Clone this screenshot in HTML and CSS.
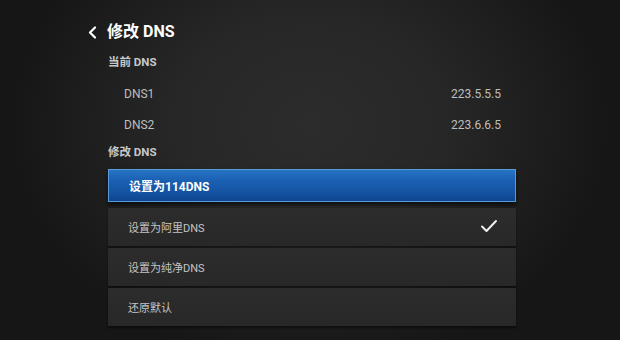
FILE: index.html
```html
<!DOCTYPE html>
<html lang="zh-CN">
<head>
<meta charset="utf-8">
<title>修改 DNS</title>
<link rel="stylesheet" href="styles.css">
</head>
<body>
<div class="screen">
  <div class="panel">
    <header class="header">
      <svg class="back" width="9" height="13" viewBox="0 0 9 13"><polyline points="7,1.5 2,6.5 7,11.5" fill="none" stroke="#fff" stroke-width="2.2" stroke-linecap="round" stroke-linejoin="round"/></svg>
      <h1 class="title">修改 DNS</h1>
    </header>
    <div class="content">
      <div class="label label-first">当前 DNS</div>
      <div class="dns-list">
        <div class="dns-row"><span>DNS1</span><span>223.5.5.5</span></div>
        <div class="dns-row"><span>DNS2</span><span>223.6.6.5</span></div>
      </div>
      <div class="label label-second">修改 DNS</div>
      <div class="item item-selected">设置为114DNS</div>
      <div class="list">
        <div class="item">设置为阿里DNS
          <svg class="check" width="18" height="14" viewBox="0 0 18 14"><polyline points="2,7.5 6.5,12 16,2" fill="none" stroke="#eee" stroke-width="2" stroke-linecap="round" stroke-linejoin="round"/></svg>
        </div>
        <div class="item">设置为纯净DNS</div>
        <div class="item">还原默认</div>
      </div>
    </div>
  </div>
</div>
</body>
</html>
```
FILE: styles.css
```css
html, body {
  margin: 0;
  padding: 0;
}
body {
  width: 620px;
  height: 340px;
  overflow: hidden;
  background: #151515;
  font-family: Roboto, "Noto Sans CJK SC", sans-serif;
}
.screen {
  width: 620px;
  height: 340px;
  background: radial-gradient(ellipse 300px 240px at 310px 125px, #2c2c2c 0%, #272727 45%, #1d1d1d 78%, #161616 100%);
  padding-top: 20px;
  box-sizing: border-box;
}
.panel {
  margin-left: 88px;
  width: 429px;
}
.header {
  display: flex;
  align-items: center;
  height: 24px;
  gap: 10px;
}
.back {
  display: block;
}
.title {
  margin: 0;
  font-size: 16px;
  font-weight: bold;
  color: #fff;
  line-height: 24px;
}
.content {
  margin-left: 20px;
  width: 408px;
}
.label {
  height: 20px;
  line-height: 20px;
  font-size: 11.5px;
  font-weight: bold;
  color: #c8c8c8;
}
.label-first {
  margin-top: 8px;
}
.label-second {
  margin-top: 2px;
}
.dns-list {
  margin-top: 6px;
}
.dns-row {
  display: flex;
  justify-content: space-between;
  align-items: center;
  height: 31px;
  padding: 0 15px 0 16px;
  font-size: 12px;
  color: #bdbdbd;
}
.item {
  display: flex;
  align-items: center;
  justify-content: space-between;
  height: 38px;
  padding: 0 18px 0 20px;
  box-sizing: border-box;
  font-size: 11px;
  color: #c4c4c4;
  background: linear-gradient(#2c2c2c, #282828);
  box-shadow: 0 2px 2px rgba(0, 0, 0, 0.45);
}
.item-selected {
  margin-top: 7px;
  height: 33px;
  color: #fff;
  font-weight: bold;
  font-size: 12px;
  background: linear-gradient(#2674c4 0%, #1b62b4 30%, #1454a3 70%, #0f4590 100%);
  border: 1px solid #5a9ad8;
  box-shadow: 0 3px 4px rgba(0, 0, 0, 0.6);
}
.list {
  display: flex;
  flex-direction: column;
  gap: 2px;
  margin-top: 6px;
}
.check {
  display: block;
  margin-top: -3px;
}
```
